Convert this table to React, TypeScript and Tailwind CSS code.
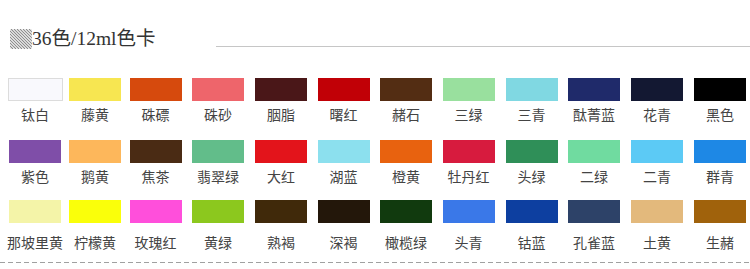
import React from 'react';

type Swatch = { name: string; color: string; border?: boolean };

const rows: Swatch[][] = [
  [
    { name: '钛白', color: '#f9f9fd', border: true },
    { name: '藤黄', color: '#f7e651' },
    { name: '硃磦', color: '#d64a0d' },
    { name: '硃砂', color: '#ee656b' },
    { name: '胭脂', color: '#4a1718' },
    { name: '曙红', color: '#c10006' },
    { name: '赭石', color: '#532d13' },
    { name: '三绿', color: '#99e09e' },
    { name: '三青', color: '#80d8e2' },
    { name: '酞菁蓝', color: '#1f2a6a' },
    { name: '花青', color: '#131832' },
    { name: '黑色', color: '#000000' },
  ],
  [
    { name: '紫色', color: '#7f4ea8' },
    { name: '鹅黄', color: '#fdb75b' },
    { name: '焦茶', color: '#4a2b14' },
    { name: '翡翠绿', color: '#62bd8a' },
    { name: '大红', color: '#e3141b' },
    { name: '湖蓝', color: '#8ce0ee' },
    { name: '橙黄', color: '#e8620f' },
    { name: '牡丹红', color: '#d71b3e' },
    { name: '头绿', color: '#2f8f58' },
    { name: '二绿', color: '#70dba0' },
    { name: '二青', color: '#5ccaf5' },
    { name: '群青', color: '#1e88e5' },
  ],
  [
    { name: '那坡里黄', color: '#f4f4a8' },
    { name: '柠檬黄', color: '#faff0a' },
    { name: '玫瑰红', color: '#ff4fdb' },
    { name: '黄绿', color: '#8cc81e' },
    { name: '熟褐', color: '#40290a' },
    { name: '深褐', color: '#23170a' },
    { name: '橄榄绿', color: '#113a0e' },
    { name: '头青', color: '#3a78e8' },
    { name: '钴蓝', color: '#0d3fa0' },
    { name: '孔雀蓝', color: '#2d4268' },
    { name: '土黄', color: '#e3b97c' },
    { name: '生赭', color: '#a0620c' },
  ],
];

const HatchIcon = () => (
  <svg width="22" height="20" viewBox="0 0 22 20" className="shrink-0 mb-[1px]">
    <defs>
      <clipPath id="sq">
        <rect x="0" y="0" width="22" height="20" />
      </clipPath>
    </defs>
    <g clipPath="url(#sq)" stroke="#8a8a8a" strokeWidth="1.1">
      {Array.from({ length: 16 }).map((_, i) => (
        <line key={i} x1={-20 + i * 3} y1={0} x2={-20 + i * 3 + 20} y2={20} />
      ))}
    </g>
  </svg>
);

export default function App() {
  return (
    <div className="w-[750px] h-[269px] bg-white overflow-hidden font-['Noto_Sans_CJK_SC',sans-serif]">
      <div className="flex items-end pl-[10px] pt-[27px] h-[50px]">
        <HatchIcon />
        <span className="text-[19.5px] leading-[23px] text-[#333] font-['Liberation_Serif','Noto_Sans_CJK_SC',serif]">
          36色/12ml色卡
        </span>
        <div className="flex-1 ml-[60px] mb-[3px] h-px bg-[#c6c6c6]" />
      </div>

      <div className="pl-[5px] pt-[28px]">
        {rows.map((row, r) => (
          <div
            key={r}
            className={`grid grid-cols-[60px_60px_61px_64px_62px_63px_62px_63px_63px_62px_64px_62px] ${
              r === 0 ? 'h-[62px]' : 'h-[60px]'
            }`}
          >
            {row.map((s) => (
              <div key={s.name} className="flex flex-col items-center">
                <div
                  className={`h-[23px] ${s.border ? 'w-[55px] border border-[#dcdcdc]' : 'w-[52px]'}`}
                  style={{ backgroundColor: s.color }}
                />
                <div
                  className={`whitespace-nowrap text-[14px] leading-[20px] text-[#444] ${
                    r === 2 ? 'mt-[9px]' : 'mt-[3px]'
                  }`}
                >
                  {s.name}
                </div>
              </div>
            ))}
          </div>
        ))}
      </div>

      <div className="mt-[2px] h-px bg-[repeating-linear-gradient(90deg,#a0a0a0_0_5px,transparent_5px_8px)]" />
    </div>
  );
}
